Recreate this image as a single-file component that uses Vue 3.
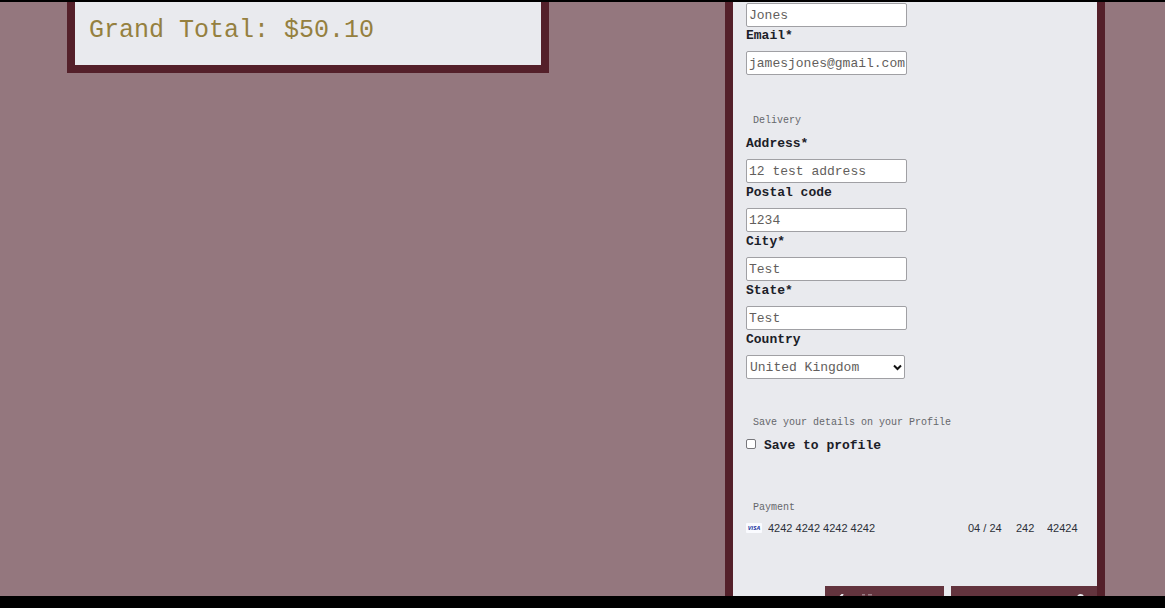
<script setup>
import { ref } from 'vue'

const surname = ref('Jones')
const email = ref('jamesjones@gmail.com')
const address = ref([
  { id: 'address', label: 'Address*', value: '12 test address' },
  { id: 'postcode', label: 'Postal code', value: '1234' },
  { id: 'city', label: 'City*', value: 'Test' },
  { id: 'state', label: 'State*', value: 'Test' }
])
const country = ref('United Kingdom')
const save = ref(false)
const card = ref({ number: '4242 4242 4242 4242', expiry: '04 / 24', cvc: '242', zip: '42424' })
</script>

<template>
  <main class="screen">
    <section class="panel summary">
      <p class="total">Grand Total: $50.10</p>
    </section>

    <form class="panel checkout" @submit.prevent>
      <div class="contact">
        <input id="surname" v-model="surname" class="box" type="text" aria-label="Surname" />
        <div class="field">
          <label for="email">Email*</label>
          <input id="email" v-model="email" class="box" type="email" />
        </div>
      </div>

      <h2>Delivery</h2>
      <div class="delivery">
        <div v-for="item in address" :key="item.id" class="field">
          <label :for="item.id">{{ item.label }}</label>
          <input :id="item.id" v-model="item.value" class="box" type="text" />
        </div>
        <div class="field">
          <label for="country">Country</label>
          <div class="select">
            <select id="country" v-model="country" class="box">
              <option>United Kingdom</option>
            </select>
            <svg class="chevron" viewBox="0 0 9 7" aria-hidden="true"><path d="M1 1.5l3.5 3.5L8 1.5" /></svg>
          </div>
        </div>
      </div>

      <h2>Save your details on your Profile</h2>
      <div class="save">
        <input id="save" v-model="save" type="checkbox" />
        <label for="save">Save to profile</label>
      </div>

      <h2>Payment</h2>
      <div class="card">
        <svg class="visa" viewBox="0 0 16 10" role="img" aria-label="Visa">
          <rect width="16" height="10" rx="1" fill="#fafbff" />
          <text x="8" y="7" text-anchor="middle">VISA</text>
        </svg>
        <input v-model="card.number" class="number" aria-label="Card number" />
        <input v-model="card.expiry" class="expiry" aria-label="Expiry date" />
        <input v-model="card.cvc" class="cvc" aria-label="Security code" />
        <input v-model="card.zip" class="zip" aria-label="Postal code" />
      </div>

      <div class="actions">
        <button class="back" type="button" aria-label="Back">
          <svg width="40" height="12" viewBox="0 0 40 12" aria-hidden="true">
            <path d="M6 0L1 5l5 5" />
            <path d="M25 0.5h3M31 0.5h4" opacity=".4" />
          </svg>
        </button>
        <button class="pay" type="submit" aria-label="Complete order">
          <svg width="9" height="12" viewBox="0 0 9 12" aria-hidden="true">
            <path d="M2 6V3.5a2.5 2.5 0 0 1 5 0V6" />
            <rect x="0" y="5" width="9" height="7" rx="1" fill="#e9eaee" />
          </svg>
        </button>
      </div>
    </form>
  </main>
</template>

<style>
body {
  margin: 0;
  background: #000;
}
</style>

<style scoped>
.screen,
.screen * {
  box-sizing: border-box;
}
.screen {
  display: grid;
  grid-template-columns: 482fr 380fr;
  column-gap: 176px;
  align-items: start;
  height: 100vh;
  padding: 0 60px 0 67px;
  overflow: hidden;
  border-top: 2px solid #000;
  border-bottom: 12px solid #000;
  background: #94777e;
  color: #1b2028;
  font-family: "Liberation Mono", "Courier New", monospace;
  font-size: 13px;
}
.panel {
  border: 8px solid #54202a;
  border-top: 0;
  background: #e9eaee;
}
.total {
  margin: 0;
  padding: 13px 14px 18px;
  color: #95803f;
  font-size: 25px;
  line-height: 32px;
}
.checkout {
  padding: 1px 0 0 13px;
}
.contact {
  padding-bottom: 2px;
}
.delivery {
  display: grid;
  row-gap: 1px;
}
.field {
  display: flex;
  flex-direction: column;
  align-items: flex-start;
}
label {
  margin-bottom: 7px;
  font-weight: bold;
  line-height: 17px;
}
.box {
  display: block;
  width: 161px;
  height: 24px;
  margin: 0;
  padding: 0 0 0 2px;
  border: 1px solid #a0a0a4;
  border-radius: 2px;
  background: #fff;
  color: #625e5c;
  font: inherit;
}
.select {
  position: relative;
}
select.box {
  width: 159px;
  padding-left: 3px;
  appearance: none;
}
.chevron {
  position: absolute;
  top: 9px;
  right: 3px;
  width: 9px;
  height: 7px;
  fill: none;
  stroke: #111;
  stroke-width: 2;
  pointer-events: none;
}
h2 {
  margin: 36px 0 7px;
  padding-left: 7px;
  color: #65676b;
  font-size: 10px;
  font-weight: normal;
  line-height: 15px;
}
.save {
  display: flex;
  align-items: flex-start;
  gap: 8px;
  padding-bottom: 3px;
}
.save input {
  width: 10px;
  height: 10px;
  margin: 2px 0 0;
  appearance: none;
  border: 1px solid #77777b;
  border-radius: 2px;
  background: #fff;
}
.save input:checked {
  background: #54202a;
}
.card {
  display: flex;
  align-items: center;
  height: 12px;
  padding-right: 13px;
}
.visa {
  flex: none;
  width: 16px;
  height: 10px;
  margin-right: 6px;
}
.visa text {
  fill: #2336a0;
  font: italic bold 6px "Open Sans", sans-serif;
}
.card input {
  height: 16px;
  padding: 0;
  border: 0;
  background: transparent;
  color: #2c3038;
  font: 11px "Liberation Sans", Arial, sans-serif;
}
.card .number {
  flex: 1;
  min-width: 0;
}
.card .expiry {
  width: 48px;
}
.card .cvc {
  width: 31px;
}
.card .zip {
  width: 37px;
}
.actions {
  display: flex;
  justify-content: flex-end;
  align-items: flex-start;
  gap: 7px;
  margin-top: 52px;
}
.actions button {
  display: flex;
  height: 38px;
  padding: 8px 12px;
  border: 0;
  background: #63343e;
}
.actions svg {
  fill: none;
  stroke: #e9eaee;
  stroke-width: 2;
}
.back {
  width: 119px;
}
.pay {
  justify-content: flex-end;
  width: 146px;
}
</style>
